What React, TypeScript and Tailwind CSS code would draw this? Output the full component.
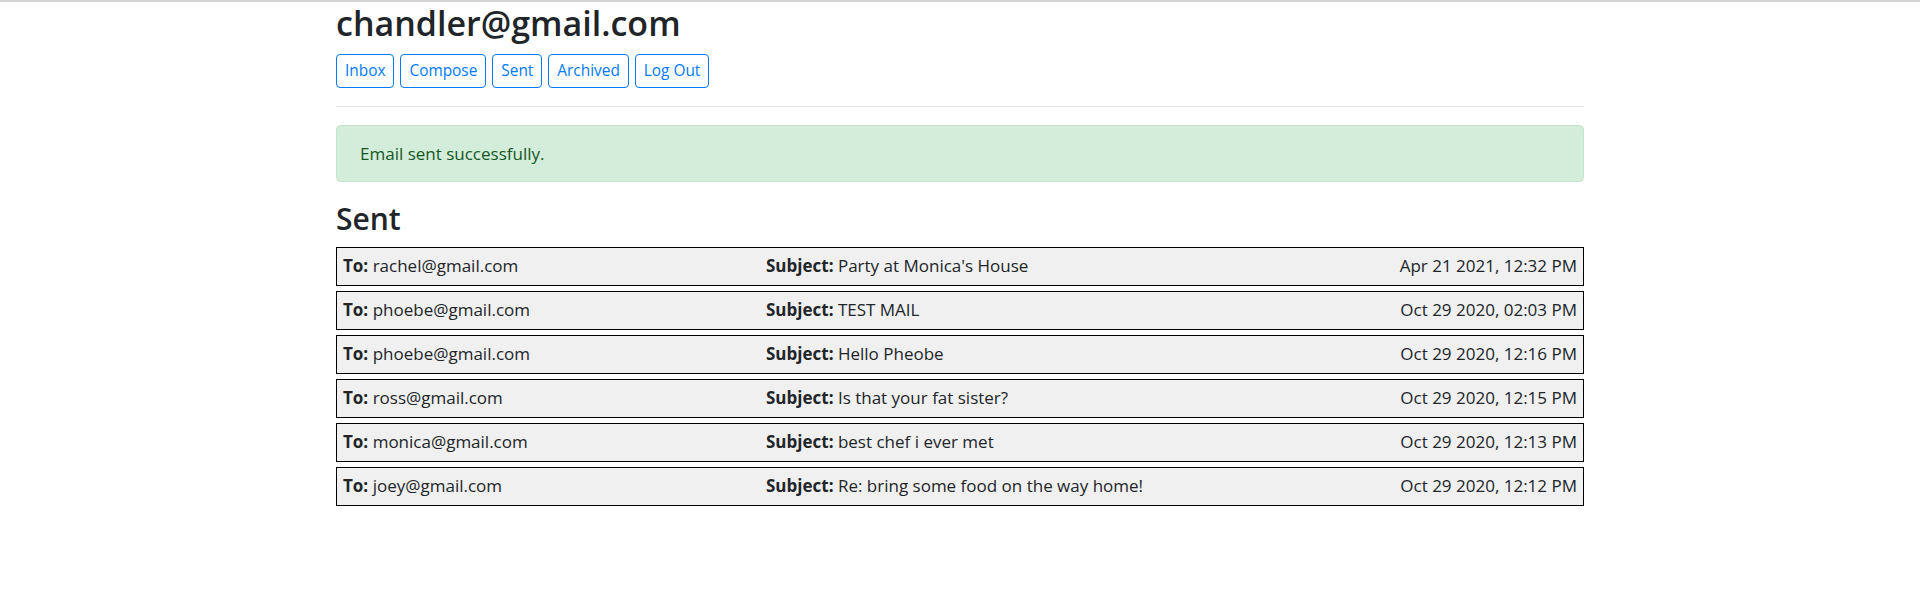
const emails = [
  { to: 'rachel@gmail.com', subject: "Party at Monica's House", date: 'Apr 21 2021, 12:32 PM' },
  { to: 'phoebe@gmail.com', subject: 'TEST MAIL', date: 'Oct 29 2020, 02:03 PM' },
  { to: 'phoebe@gmail.com', subject: 'Hello Pheobe', date: 'Oct 29 2020, 12:16 PM' },
  { to: 'ross@gmail.com', subject: 'Is that your fat sister?', date: 'Oct 29 2020, 12:15 PM' },
  { to: 'monica@gmail.com', subject: 'best chef i ever met', date: 'Oct 29 2020, 12:13 PM' },
  { to: 'joey@gmail.com', subject: 'Re: bring some food on the way home!', date: 'Oct 29 2020, 12:12 PM' },
];

const NAV = ['Inbox', 'Compose', 'Sent', 'Archived', 'Log Out'];

function NavButton({ label }: { label: string }) {
  return (
    <button className="h-[34px] rounded-[4px] border border-[#007bff] bg-white px-[8px] text-[15.4px] leading-none text-[#007bff]">
      {label}
    </button>
  );
}

function EmailRow({ to, subject, date }: { to: string; subject: string; date: string }) {
  return (
    <div className="mb-[5px] flex h-[39px] items-center border border-black bg-[#f0f0f0] pb-[1px] pl-[6px] pr-[6px] text-[17px] text-[#212529]">
      <span className="w-[423px] shrink-0">
        <b className="font-bold">To:</b> {to}
      </span>
      <span className="flex-1">
        <b className="font-bold">Subject:</b> {subject}
      </span>
      <span>{date}</span>
    </div>
  );
}

export default function App() {
  return (
    <div className="min-h-[590px] bg-white font-['Open_Sans',sans-serif] text-[#212529]">
      <div className="h-[2px] bg-[#d3d3d3]" />
      <div className="mx-auto w-[1248px]">
        <h2 className="mb-[9px] text-[34px] font-semibold leading-[43px]">chandler@gmail.com</h2>
        <div className="flex gap-[6px]">
          {NAV.map((n) => (
            <NavButton key={n} label={n} />
          ))}
        </div>
        <hr className="mt-[18px] mb-[18px] border-t border-[#e5e5e5]" />
        <div className="flex h-[57px] items-center rounded-[4.5px] border border-[#c3e6cb] bg-[#d4edda] px-[23px] text-[17px] text-[#155724]">
          Email sent successfully.
        </div>
        <h3 className="mt-[18px] mb-[9px] text-[30px] font-semibold leading-[38px]">Sent</h3>
        <div>
          {emails.map((e, i) => (
            <EmailRow key={i} {...e} />
          ))}
        </div>
      </div>
    </div>
  );
}
